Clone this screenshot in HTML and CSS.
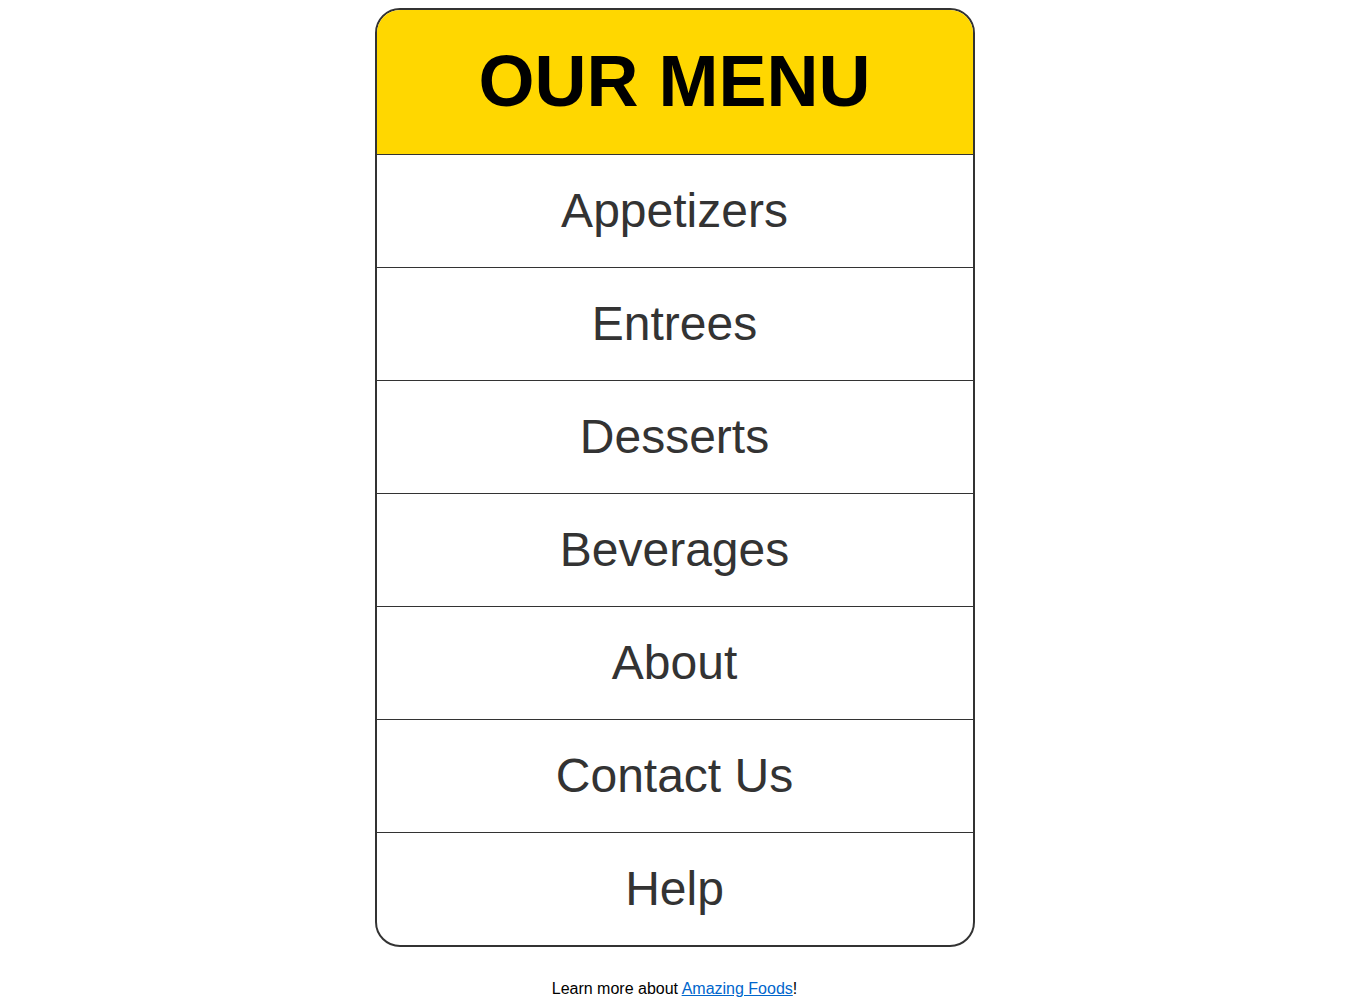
FILE: index.html
```html
<!DOCTYPE html>
<html lang="en">
<head>
<meta charset="utf-8">
<title>Our Menu</title>
<link rel="stylesheet" href="styles.css">
</head>
<body>
<nav class="menu">
  <h1 class="menu-title">OUR MENU</h1>
  <ul class="menu-list">
    <li class="menu-item"><a href="#">Appetizers</a></li>
    <li class="menu-item"><a href="#">Entrees</a></li>
    <li class="menu-item"><a href="#">Desserts</a></li>
    <li class="menu-item"><a href="#">Beverages</a></li>
    <li class="menu-item"><a href="#">About</a></li>
    <li class="menu-item"><a href="#">Contact Us</a></li>
    <li class="menu-item"><a href="#">Help</a></li>
  </ul>
</nav>
<p class="footer">Learn more about <a href="#">Amazing Foods</a>!</p>
</body>
</html>
```

FILE: styles.css
```css
body {
  margin: 8px;
  font-family: "Liberation Sans", Arial, sans-serif;
  background: #fff;
  color: #000;
}

.menu {
  width: 596px;
  margin: 0 auto;
  border: 2px solid #333;
  border-radius: 25px;
  overflow: hidden;
}

.menu-title {
  margin: 0;
  padding: 29px 0 31px;
  background: #ffd700;
  border-bottom: 1px solid #333;
  text-align: center;
  font-size: 72px;
  line-height: 84px;
  font-weight: bold;
  color: #000;
}

.menu-list {
  list-style: none;
  margin: 0;
  padding: 0;
}

.menu-item {
  border-bottom: 1px solid #333;
}

.menu-item:last-child {
  border-bottom: none;
}

.menu-item a {
  display: block;
  padding: 28px 0;
  text-align: center;
  font-size: 48px;
  line-height: 56px;
  color: #333;
  text-decoration: none;
}

.footer {
  margin: 33px 0 0;
  text-align: center;
  font-size: 16px;
  line-height: 18px;
}

.footer a {
  color: #0066cc;
}
```
